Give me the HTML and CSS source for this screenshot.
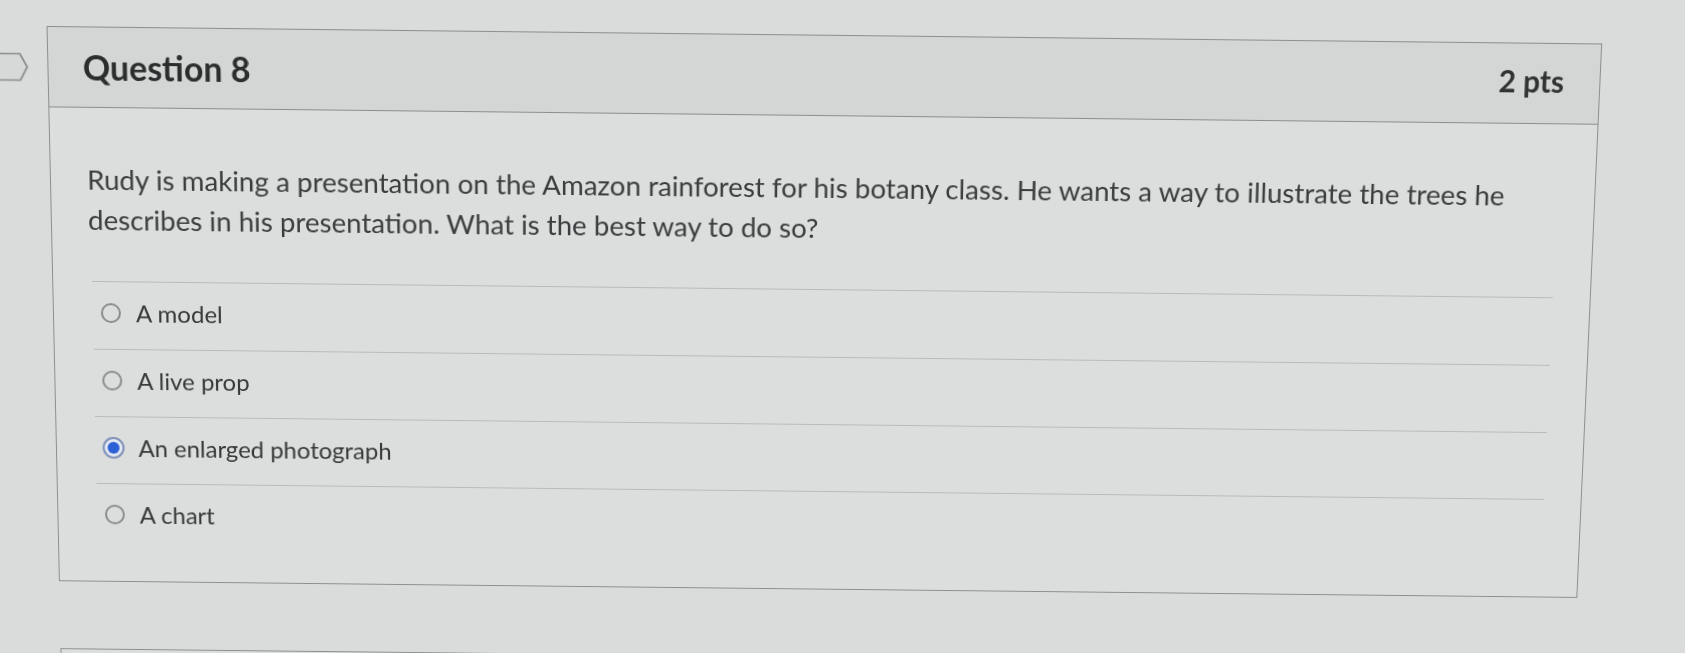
FILE: index.html
```html
<!DOCTYPE html>
<html lang="en">
<head>
<meta charset="utf-8">
<title>Question 8</title>
<link rel="stylesheet" href="styles.css">
</head>
<body>
<div class="stage">
  <div class="question-row">
    <div class="flag-col">
      <svg class="flag" width="40" height="30" viewBox="0 0 40 30" aria-hidden="true">
        <polygon points="-4,1.5 29,1.5 36,14.5 29,27.5 -4,27.5" fill="#d7d9d8" stroke="#8c8e8e" stroke-width="1.7" stroke-linejoin="round"/>
      </svg>
    </div>
    <div class="card">
      <div class="card-header">
        <div class="q-name">Question 8</div>
        <div class="q-points">2 pts</div>
      </div>
      <div class="card-body">
        <p class="q-text">Rudy is making a presentation on the Amazon rainforest for his botany class. He wants a way to illustrate the trees he describes in his presentation. What is the best way to do so?</p>
        <div class="answers">
          <label class="answer">
            <span class="radio"></span>
            <span class="answer-text">A model</span>
          </label>
          <label class="answer">
            <span class="radio"></span>
            <span class="answer-text">A live prop</span>
          </label>
          <label class="answer">
            <span class="radio radio-on"><span class="radio-dot"></span></span>
            <span class="answer-text">An enlarged photograph</span>
          </label>
          <label class="answer">
            <span class="radio"></span>
            <span class="answer-text">A chart</span>
          </label>
        </div>
      </div>
    </div>
  </div>
  <div class="question-row next-row">
    <div class="flag-col"></div>
    <div class="card next-card"></div>
  </div>
</div>
</body>
</html>
```

FILE: styles.css
```css
html, body {
  margin: 0;
  padding: 0;
}

body {
  background: #dadcdb;
  font-family: Lato, "Open Sans", "Liberation Sans", sans-serif;
  color: #3a3c3d;
  width: 1685px;
  height: 653px;
  overflow: hidden;
}

.stage {
  padding-top: 37px;
  transform-origin: 820px 314px;
  transform: perspective(2000px) rotateX(-5deg) rotate(0.64deg);
}

.question-row {
  display: flex;
  align-items: flex-start;
}

.flag-col {
  width: 53px;
  flex: 0 0 53px;
  display: flex;
  justify-content: flex-start;
}

.flag {
  display: block;
  margin-top: 26px;
  margin-left: -3px;
}

.card {
  width: 1537px;
  flex: 0 0 1537px;
  box-sizing: border-box;
  border: 1px solid #8d8f8f;
  background: #dcdedd;
}

.card-header {
  height: 79px;
  box-sizing: border-box;
  border-bottom: 1px solid #8d8f8f;
  background: #d4d6d5;
  display: flex;
  align-items: center;
  justify-content: space-between;
  padding: 0 35px 0 34px;
  color: #2b2d2e;
}

.q-name {
  font-size: 33.5px;
  font-weight: 700;
}

.q-points {
  font-size: 29.5px;
  font-weight: 700;
  padding-bottom: 5px;
  color: #303233;
}

.card-body {
  padding: 51px 37px 32px 36px;
}

.q-text {
  margin: 0;
  font-size: 27.6px;
  line-height: 40px;
  color: #3b3d3e;
}

.answers {
  margin: 41px 0 0 3px;
}

.answer {
  display: flex;
  align-items: center;
  border-top: 1px solid #b9bbbb;
  padding: 16px 0 21px 8px;
  height: 30px;
}

.radio {
  width: 20px;
  height: 20px;
  box-sizing: border-box;
  border: 2px solid #8b8d8d;
  border-radius: 50%;
  flex: 0 0 20px;
  margin-right: 15px;
  margin-top: -1px;
  display: flex;
  align-items: center;
  justify-content: center;
}

.radio-on {
  width: 22px;
  height: 22px;
  flex-basis: 22px;
  margin-left: -1px;
  margin-right: 14px;
  border: 2px solid #7f90b8;
  background: #e4e9f3;
}

.radio-dot {
  width: 12px;
  height: 12px;
  border-radius: 50%;
  background: #2d5fd6;
}

.answer-text {
  font-size: 24px;
  line-height: 30px;
  color: #37393a;
}

.next-row {
  margin-top: 69px;
}

.next-card {
  height: 40px;
  background: #dcdedd;
}
```
